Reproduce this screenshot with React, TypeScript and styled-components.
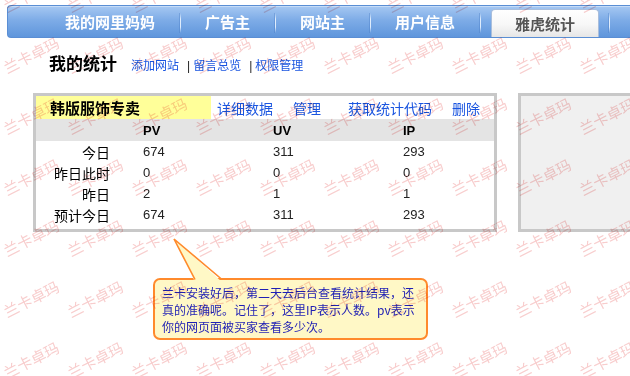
import React from "react";
import styled, { createGlobalStyle } from "styled-components";

const CJK = `"Noto Sans CJK SC", "Liberation Sans", sans-serif`;
const LATIN = `"Liberation Sans", "Noto Sans CJK SC", sans-serif`;
const LINK = "#1a55e0";

const GlobalStyle = createGlobalStyle`
  html, body { margin: 0; padding: 0; background: #fff; }
  body { font-family: ${LATIN}; }
`;

const Page = styled.div`
  position: relative;
  width: 630px;
  height: 376px;
  overflow: hidden;
  padding: 5px 0 0 7px;
  box-sizing: border-box;
  background: #fff;
`;

const TabBar = styled.div`
  display: flex;
  align-items: stretch;
  height: 33px;
  box-sizing: border-box;
  margin-right: -30px;
  padding-left: 32px;
  border: 1px solid #5a8ed4;
  border-right: none;
  border-radius: 4px 0 0 4px;
  background: linear-gradient(#a6c8f2 0%, #7eace7 45%, #5f96dc 100%);
  box-shadow: inset 0 1px 0 #c6dcf7;
`;

const Tab = styled.div`
  display: flex;
  align-items: center;
  padding: 0 25px;
  color: #fff;
  font: bold 15px/1 ${CJK};
  white-space: nowrap;
`;

const TabSep = styled.div`
  width: 1px;
  margin: 7px -1px 4px 0;
  background: linear-gradient(
    rgba(255, 255, 255, 0),
    rgba(235, 244, 255, 0.9) 30%,
    rgba(235, 244, 255, 0.9) 70%,
    rgba(255, 255, 255, 0)
  );
  box-shadow: -1px 0 0 rgba(70, 120, 195, 0.35);
`;

const ActiveTab = styled.div`
  align-self: flex-end;
  display: flex;
  align-items: center;
  height: 28px;
  box-sizing: border-box;
  margin: 0 10px 0 11px;
  padding: 0 23px;
  border: 1px solid #a9bedc;
  border-bottom: none;
  border-radius: 4px 4px 0 0;
  background: linear-gradient(#ffffff 0%, #f7f7f7 55%, #e6e6e6 100%);
  color: #555;
  font: bold 15px/1 ${CJK};
  white-space: nowrap;
`;

const TitleRow = styled.div`
  display: flex;
  align-items: baseline;
  height: 20px;
  margin: 15px 0 0 42px;
`;

const Title = styled.h2`
  margin: 0 14px 0 0;
  font: bold 17px/20px ${CJK};
  color: #000;
`;

const NavLink = styled.a`
  font: 12px/20px ${CJK};
  color: ${LINK};
  text-decoration: none;
`;

const Pipe = styled.span`
  font: 12px/20px ${LATIN};
  color: #222;
  padding: 0 3px 0 8px;
`;

const ContentRow = styled.div`
  display: flex;
  align-items: flex-start;
  gap: 21px;
  margin-top: 20px;
  padding-left: 26px;
`;

const StatsBox = styled.div`
  width: 464px;
  flex-shrink: 0;
  box-sizing: border-box;
  border: 3px solid #c8c8c8;
  background: #fff;
  padding-bottom: 4px;
`;

const HeaderRow = styled.div`
  display: grid;
  grid-template-columns: 175px 76px 55px 104px 1fr;
  height: 23px;
  align-items: center;
`;

const SiteName = styled.div`
  display: flex;
  align-items: center;
  height: 100%;
  padding-left: 14px;
  background: #ffff99;
  font: bold 15px/1 ${CJK};
  color: #000;
`;

const ActionLink = styled.a`
  padding-left: 6px;
  font: 14px/1 ${CJK};
  color: ${LINK};
  text-decoration: none;
  white-space: nowrap;
`;

const gridCols = `107px 130px 130px 1fr`;

const ColHeadRow = styled.div`
  display: grid;
  grid-template-columns: ${gridCols};
  height: 22px;
  align-items: center;
  background: #e4e4e4;
  font: bold 13px/1 ${LATIN};
  color: #000;
`;

const DataRow = styled.div`
  display: grid;
  grid-template-columns: ${gridCols};
  height: 21px;
  align-items: center;
`;

const Label = styled.div`
  text-align: right;
  padding-right: 33px;
  font: 14px/1 ${CJK};
  color: #000;
  white-space: nowrap;
`;

const Num = styled.div`
  font: 13px/1 ${LATIN};
  color: #222;
`;

const SidePanel = styled.div`
  width: 140px;
  height: 139px;
  flex-shrink: 0;
  box-sizing: border-box;
  border: 3px solid #c8c8c8;
  background: #f0f0f0;
`;

const Callout = styled.div`
  position: relative;
  width: 275px;
  box-sizing: border-box;
  margin: 46px 0 0 146px;
  padding: 4px 7px 3px 7px;
  border: 2px solid #ff8a2c;
  border-radius: 7px;
  background: #fff8c6;
  font: 12px/17px ${CJK};
  color: #1f1fb4;
  white-space: nowrap;
`;

const Pointer = styled.svg`
  position: absolute;
  left: 16px;
  top: -42px;
  overflow: visible;
`;

const Watermark = styled.div`
  position: absolute;
  inset: 0;
  overflow: hidden;
  pointer-events: none;
  z-index: 10;
  mix-blend-mode: multiply;
`;

const WatermarkGrid = styled.div`
  position: absolute;
  top: -37px;
  left: -65px;
  display: grid;
  grid-template-columns: repeat(12, 64px);
  grid-auto-rows: 61px;
`;

const Mark = styled.span`
  display: flex;
  align-items: center;
  justify-content: center;
  transform: rotate(-27deg);
  font: 15px/1 ${CJK};
  color: #f8cdcd;
  white-space: nowrap;
`;

const tabs = ["我的网里妈妈", "广告主", "网站主", "用户信息"];

const rows = [
  { label: "今日", pv: "674", uv: "311", ip: "293" },
  { label: "昨日此时", pv: "0", uv: "0", ip: "0" },
  { label: "昨日", pv: "2", uv: "1", ip: "1" },
  { label: "预计今日", pv: "674", uv: "311", ip: "293" },
];

const actions = ["详细数据", "管理", "获取统计代码", "删除"];

export default function App() {
  return (
    <>
      <GlobalStyle />
      <Page>
        <TabBar>
          {tabs.map((t) => (
            <React.Fragment key={t}>
              <Tab>{t}</Tab>
              <TabSep />
            </React.Fragment>
          ))}
          <ActiveTab>雅虎统计</ActiveTab>
          <TabSep />
        </TabBar>

        <TitleRow>
          <Title>我的统计</Title>
          <NavLink href="#">添加网站</NavLink>
          <Pipe>|</Pipe>
          <NavLink href="#">留言总览</NavLink>
          <Pipe>|</Pipe>
          <NavLink href="#">权限管理</NavLink>
        </TitleRow>

        <ContentRow>
          <StatsBox>
            <HeaderRow>
              <SiteName>韩版服饰专卖</SiteName>
              {actions.map((a) => (
                <ActionLink key={a} href="#">
                  {a}
                </ActionLink>
              ))}
            </HeaderRow>
            <ColHeadRow>
              <span />
              <span>PV</span>
              <span>UV</span>
              <span>IP</span>
            </ColHeadRow>
            {rows.map((r) => (
              <DataRow key={r.label}>
                <Label>{r.label}</Label>
                <Num>{r.pv}</Num>
                <Num>{r.uv}</Num>
                <Num>{r.ip}</Num>
              </DataRow>
            ))}
          </StatsBox>
          <SidePanel />
        </ContentRow>

        <Callout>
          <Pointer width="56" height="46" viewBox="0 0 56 46">
            <polygon points="3,1 24,44 51,44" fill="#fff8c6" />
            <polyline
              points="24,41.5 3,1 51,41.5"
              fill="none"
              stroke="#ff8a2c"
              strokeWidth="1.6"
              strokeLinejoin="miter"
            />
          </Pointer>
          兰卡安装好后，第二天去后台查看统计结果，还
          <br />
          真的准确呢。记住了，这里IP表示人数。pv表示
          <br />
          你的网页面被买家查看多少次。
        </Callout>

        <Watermark>
          <WatermarkGrid>
            {Array.from({ length: 12 * 8 }).map((_, i) => (
              <Mark key={i}>兰卡卓玛</Mark>
            ))}
          </WatermarkGrid>
        </Watermark>
      </Page>
    </>
  );
}
